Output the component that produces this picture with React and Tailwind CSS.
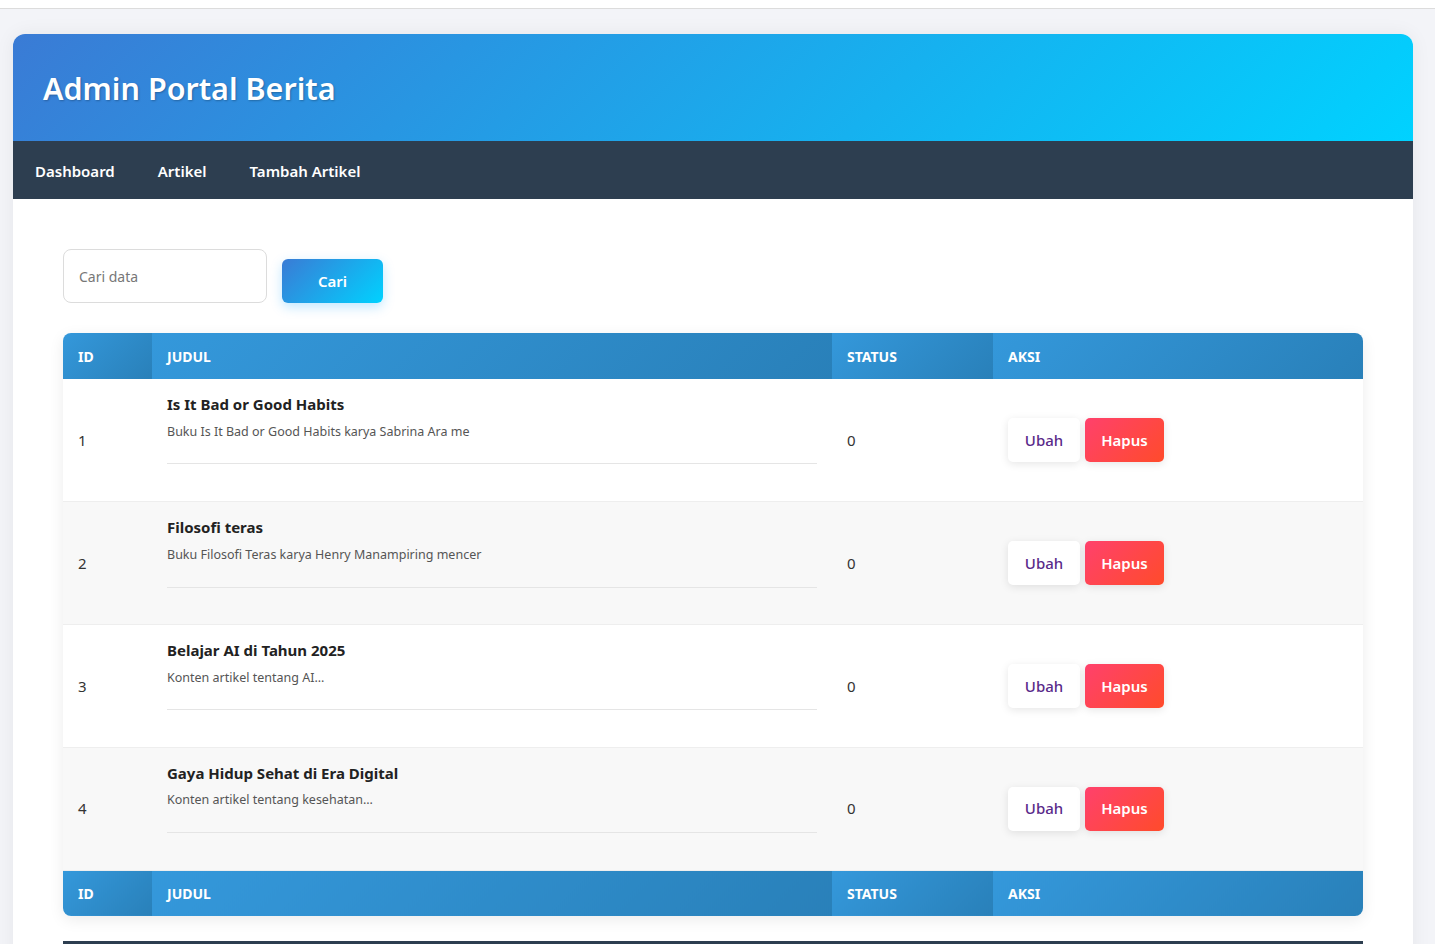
const rows = [
  { id: 1, judul: "Is It Bad or Good Habits", isi: "Buku Is It Bad or Good Habits karya Sabrina Ara me", status: 0 },
  { id: 2, judul: "Filosofi teras", isi: "Buku Filosofi Teras karya Henry Manampiring mencer", status: 0 },
  { id: 3, judul: "Belajar AI di Tahun 2025", isi: "Konten artikel tentang AI...", status: 0 },
  { id: 4, judul: "Gaya Hidup Sehat di Era Digital", isi: "Konten artikel tentang kesehatan...", status: 0 },
];

const th = "h-[46px] px-[15px] text-left text-[14px] font-bold uppercase text-white bg-[linear-gradient(135deg,#3498db,#2980b9)]";

function HeadRow() {
  return (
    <tr>
      <th className={th + " w-[89px]"}>ID</th>
      <th className={th}>Judul</th>
      <th className={th + " w-[161px]"}>Status</th>
      <th className={th + " w-[370px]"}>Aksi</th>
    </tr>
  );
}

export default function App() {
  return (
    <div className="min-h-screen bg-[#f3f4f8] font-['Noto_Sans','Open_Sans',sans-serif] text-[#333]">
      <div className="h-[9px] bg-white border-b border-[#dcdcdc]" />
      <div className="pl-[13px] pr-[22px] pt-[25px]">
        <div className="rounded-t-[12px] bg-white shadow-[0_0_20px_rgba(0,0,0,0.06)]">
          <header className="h-[107px] rounded-t-[12px] bg-[linear-gradient(135deg,#3a7bd5,#00d2ff)] px-[30px] pt-[2px] flex items-center">
            <h1 className="text-[30.5px] font-semibold text-white [text-shadow:1px_1px_2px_rgba(0,0,0,0.25)]">Admin Portal Berita</h1>
          </header>
          <nav className="h-[58px] bg-[#2d3e50] flex items-center px-[22px] pt-[2px] gap-[43px] text-[15px] font-semibold text-white">
            <a>Dashboard</a>
            <a>Artikel</a>
            <a>Tambah Artikel</a>
          </nav>
          <main className="px-[50px] pt-[50px] pb-[25px]">
            <div className="flex items-end gap-[15px]">
              <input
                placeholder="Cari data"
                className="w-[204px] h-[54px] rounded-[8px] border border-[#dcdcdc] px-[15px] text-[14px] placeholder:text-[#777] outline-none"
              />
              <button className="w-[101px] h-[44px] rounded-[6px] bg-[linear-gradient(135deg,#3a7bd5,#00d2ff)] text-white text-[15px] font-semibold shadow-[0_4px_12px_rgba(0,160,255,0.25)]">
                Cari
              </button>
            </div>
            <div className="mt-[30px] rounded-[8px] overflow-hidden shadow-[0_4px_15px_rgba(0,0,0,0.08)]">
              <table className="w-full border-collapse">
                <thead><HeadRow /></thead>
                <tbody>
                  {rows.map((r, i) => (
                    <tr key={r.id} className={(i % 2 ? "bg-[#f8f8f8]" : "bg-white") + " border-b border-[#eeeeee] h-[122.75px]"}>
                      <td className="px-[15px] text-[15px] text-[#333]">{r.id}</td>
                      <td className="px-[15px] align-top pt-[14px]">
                        <div className="text-[15px] font-bold text-[#222]">{r.judul}</div>
                        <div className="mt-[7px] text-[12.5px] text-[#555]">{r.isi}</div>
                        <div className="mt-[22px] border-b border-[#e5e5e5]" />
                      </td>
                      <td className="px-[15px] text-[15px] text-[#333]">{r.status}</td>
                      <td className="px-[15px]">
                        <div className="flex gap-[5px]">
                          <button className="w-[72px] h-[44px] rounded-[5px] bg-white text-[#5a2a8a] text-[15px] font-medium shadow-[0_2px_8px_rgba(0,0,0,0.1)]">Ubah</button>
                          <button className="w-[79px] h-[44px] rounded-[5px] bg-[linear-gradient(135deg,#ff416c,#ff4b2b)] text-white text-[15px] font-semibold shadow-[0_2px_8px_rgba(0,0,0,0.1)]">Hapus</button>
                        </div>
                      </td>
                    </tr>
                  ))}
                </tbody>
                <tfoot><HeadRow /></tfoot>
              </table>
            </div>
            <div className="mt-[25px] h-[10px] bg-[#2d3e50]" />
          </main>
        </div>
      </div>
    </div>
  );
}
